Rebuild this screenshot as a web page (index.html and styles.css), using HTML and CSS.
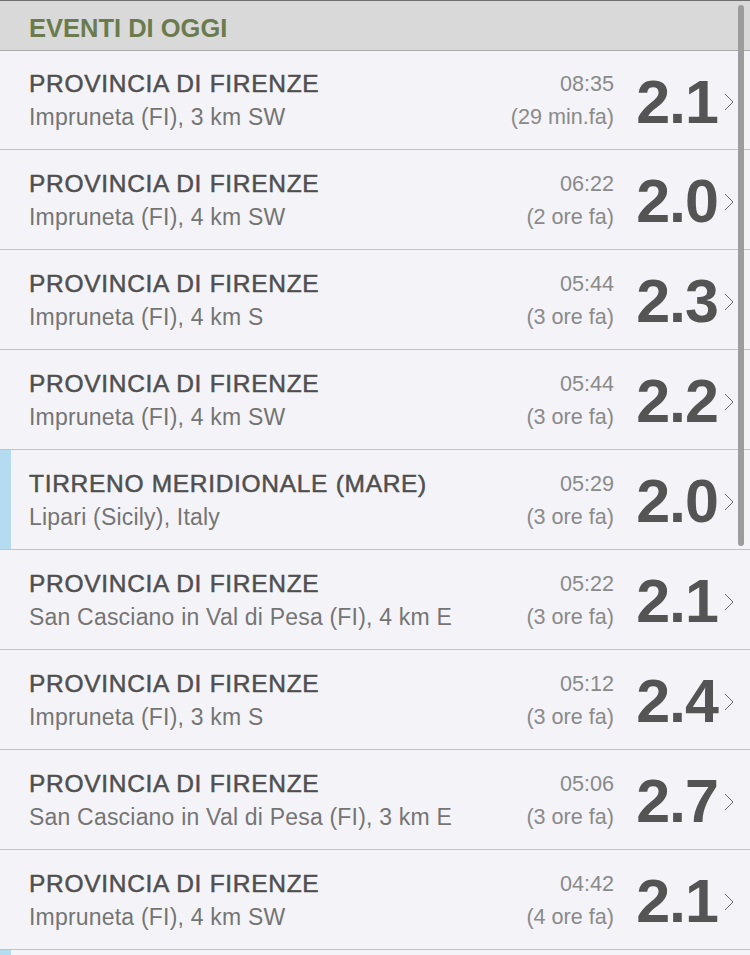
FILE: index.html
```html
<!DOCTYPE html>
<html lang="it">
<head>
<meta charset="utf-8">
<title>Eventi di oggi</title>
<link rel="stylesheet" href="styles.css">
</head>
<body>
<div class="screen">
  <div class="section-header">EVENTI DI OGGI</div>
  <ul class="list">
    <li class="row">
      <div class="place"><div class="title">PROVINCIA DI FIRENZE</div><div class="sub">Impruneta (FI), 3 km SW</div></div>
      <div class="when"><div class="time">08:35</div><div class="ago">(29 min.fa)</div></div>
      <div class="mag">2.1</div>
      <svg class="chev" viewBox="0 0 10 18"><path d="M1 1 L9 9 L1 17"/></svg>
    </li>
    <li class="row">
      <div class="place"><div class="title">PROVINCIA DI FIRENZE</div><div class="sub">Impruneta (FI), 4 km SW</div></div>
      <div class="when"><div class="time">06:22</div><div class="ago">(2 ore fa)</div></div>
      <div class="mag">2.0</div>
      <svg class="chev" viewBox="0 0 10 18"><path d="M1 1 L9 9 L1 17"/></svg>
    </li>
    <li class="row">
      <div class="place"><div class="title">PROVINCIA DI FIRENZE</div><div class="sub">Impruneta (FI), 4 km S</div></div>
      <div class="when"><div class="time">05:44</div><div class="ago">(3 ore fa)</div></div>
      <div class="mag">2.3</div>
      <svg class="chev" viewBox="0 0 10 18"><path d="M1 1 L9 9 L1 17"/></svg>
    </li>
    <li class="row">
      <div class="place"><div class="title">PROVINCIA DI FIRENZE</div><div class="sub">Impruneta (FI), 4 km SW</div></div>
      <div class="when"><div class="time">05:44</div><div class="ago">(3 ore fa)</div></div>
      <div class="mag">2.2</div>
      <svg class="chev" viewBox="0 0 10 18"><path d="M1 1 L9 9 L1 17"/></svg>
    </li>
    <li class="row sea">
      <div class="place"><div class="title">TIRRENO MERIDIONALE (MARE)</div><div class="sub">Lipari (Sicily), Italy</div></div>
      <div class="when"><div class="time">05:29</div><div class="ago">(3 ore fa)</div></div>
      <div class="mag">2.0</div>
      <svg class="chev" viewBox="0 0 10 18"><path d="M1 1 L9 9 L1 17"/></svg>
    </li>
    <li class="row">
      <div class="place"><div class="title">PROVINCIA DI FIRENZE</div><div class="sub">San Casciano in Val di Pesa (FI), 4 km E</div></div>
      <div class="when"><div class="time">05:22</div><div class="ago">(3 ore fa)</div></div>
      <div class="mag">2.1</div>
      <svg class="chev" viewBox="0 0 10 18"><path d="M1 1 L9 9 L1 17"/></svg>
    </li>
    <li class="row">
      <div class="place"><div class="title">PROVINCIA DI FIRENZE</div><div class="sub">Impruneta (FI), 3 km S</div></div>
      <div class="when"><div class="time">05:12</div><div class="ago">(3 ore fa)</div></div>
      <div class="mag">2.4</div>
      <svg class="chev" viewBox="0 0 10 18"><path d="M1 1 L9 9 L1 17"/></svg>
    </li>
    <li class="row">
      <div class="place"><div class="title">PROVINCIA DI FIRENZE</div><div class="sub">San Casciano in Val di Pesa (FI), 3 km E</div></div>
      <div class="when"><div class="time">05:06</div><div class="ago">(3 ore fa)</div></div>
      <div class="mag">2.7</div>
      <svg class="chev" viewBox="0 0 10 18"><path d="M1 1 L9 9 L1 17"/></svg>
    </li>
    <li class="row">
      <div class="place"><div class="title">PROVINCIA DI FIRENZE</div><div class="sub">Impruneta (FI), 4 km SW</div></div>
      <div class="when"><div class="time">04:42</div><div class="ago">(4 ore fa)</div></div>
      <div class="mag">2.1</div>
      <svg class="chev" viewBox="0 0 10 18"><path d="M1 1 L9 9 L1 17"/></svg>
    </li>
    <li class="row sea"></li>
  </ul>
  <div class="scrollbar"></div>
</div>
</body>
</html>
```

FILE: styles.css
```css
* { box-sizing: border-box; }
html, body {
  margin: 0;
  padding: 0;
  background: #f4f4f8;
  font-family: "Liberation Sans", Arial, sans-serif;
}
.screen {
  position: relative;
  width: 750px;
  height: 955px;
  overflow: hidden;
  background: #f4f4f8;
}
.section-header {
  height: 51px;
  border-top: 1px solid #6e6e6e;
  border-bottom: 1px solid #a9a9ab;
  background: #d9d9d9;
  color: #6b7b4e;
  font-weight: bold;
  font-size: 25.5px;
  padding: 14px 0 0 29px;
  line-height: 26px;
}
.list {
  list-style: none;
  margin: 0;
  padding: 0;
}
.row {
  display: flex;
  align-items: center;
  height: 100px;
  border-bottom: 1px solid #c3c3c7;
  padding-left: 29px;
  position: relative;
}
.row:first-child { height: 99px; }
.row.sea::before {
  content: "";
  position: absolute;
  left: 0;
  top: 0;
  bottom: 0;
  width: 11px;
  background: #b4dcf1;
}
.place {
  flex: 1;
  min-width: 0;
  padding-top: 1px;
}
.title {
  font-size: 24.5px;
  letter-spacing: 0.7px;
  color: #4f4f4f;
  line-height: 30px;
  -webkit-text-stroke: 0.5px #4f4f4f;
}
.sub {
  font-size: 23px;
  color: #747474;
  line-height: 30px;
  margin-top: 3px;
  letter-spacing: 0.2px;
}
.when {
  text-align: right;
  color: #8a8a8a;
  font-size: 21.6px;
  padding-top: 1px;
}
.time { line-height: 30px; }
.ago { line-height: 30px; margin-top: 3px; }
.mag {
  width: 104px;
  text-align: right;
  font-size: 61px;
  font-weight: bold;
  color: #545454;
  line-height: 60px;
  padding-top: 3px;
  letter-spacing: -1px;
  margin-right: 5px;
}
.chev {
  width: 10px;
  height: 18px;
  margin-left: 1px;
  margin-right: 16px;
  margin-top: 4px;
  fill: none;
  stroke: #6a6a6a;
  stroke-width: 1;
}
.scrollbar {
  position: absolute;
  left: 738px;
  top: 5px;
  width: 6px;
  height: 541px;
  border-radius: 3px;
  background: #9c9c9c;
}
```
